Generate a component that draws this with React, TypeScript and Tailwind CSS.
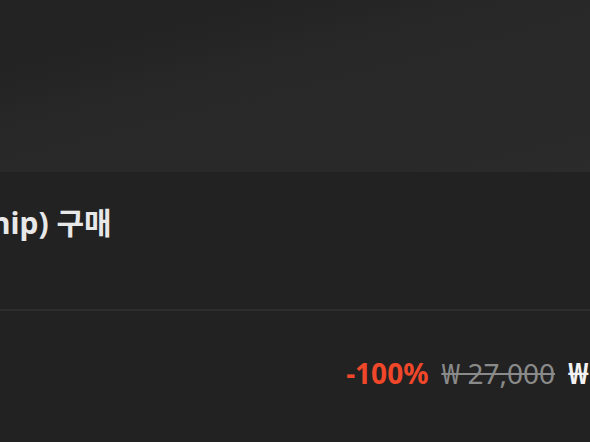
export default function App() {
  return (
    <div
      className="h-[442px] w-[590px] overflow-hidden bg-[#222222] text-white"
      style={{ fontFamily: '"Noto Sans", "Noto Sans CJK KR", sans-serif' }}
    >
      <div className="h-[172px] bg-[linear-gradient(166deg,#232323_22%,#282828_42%,#292929_85%,#2b2b2b_100%)]" />

      <div className="h-[139px] border-b-2 border-[#2d2d2d] pt-[30px]">
        <h1 className="-ml-[9px] whitespace-nowrap text-[30px] font-bold leading-[42px] text-[#e8e8e8]">
          hip) 구매
        </h1>
      </div>

      <div className="flex items-center justify-end gap-[13px] whitespace-nowrap pt-[43px] text-[28px] leading-[38px]">
        <span className="font-bold text-[#f0472a]">-100%</span>
        <span className="text-[#8a8a8a] line-through decoration-[2px]">₩ 27,000</span>
        <span className="-mr-[22px] font-bold text-[#f2f2f2]">₩ 0</span>
      </div>
    </div>
  );
}
